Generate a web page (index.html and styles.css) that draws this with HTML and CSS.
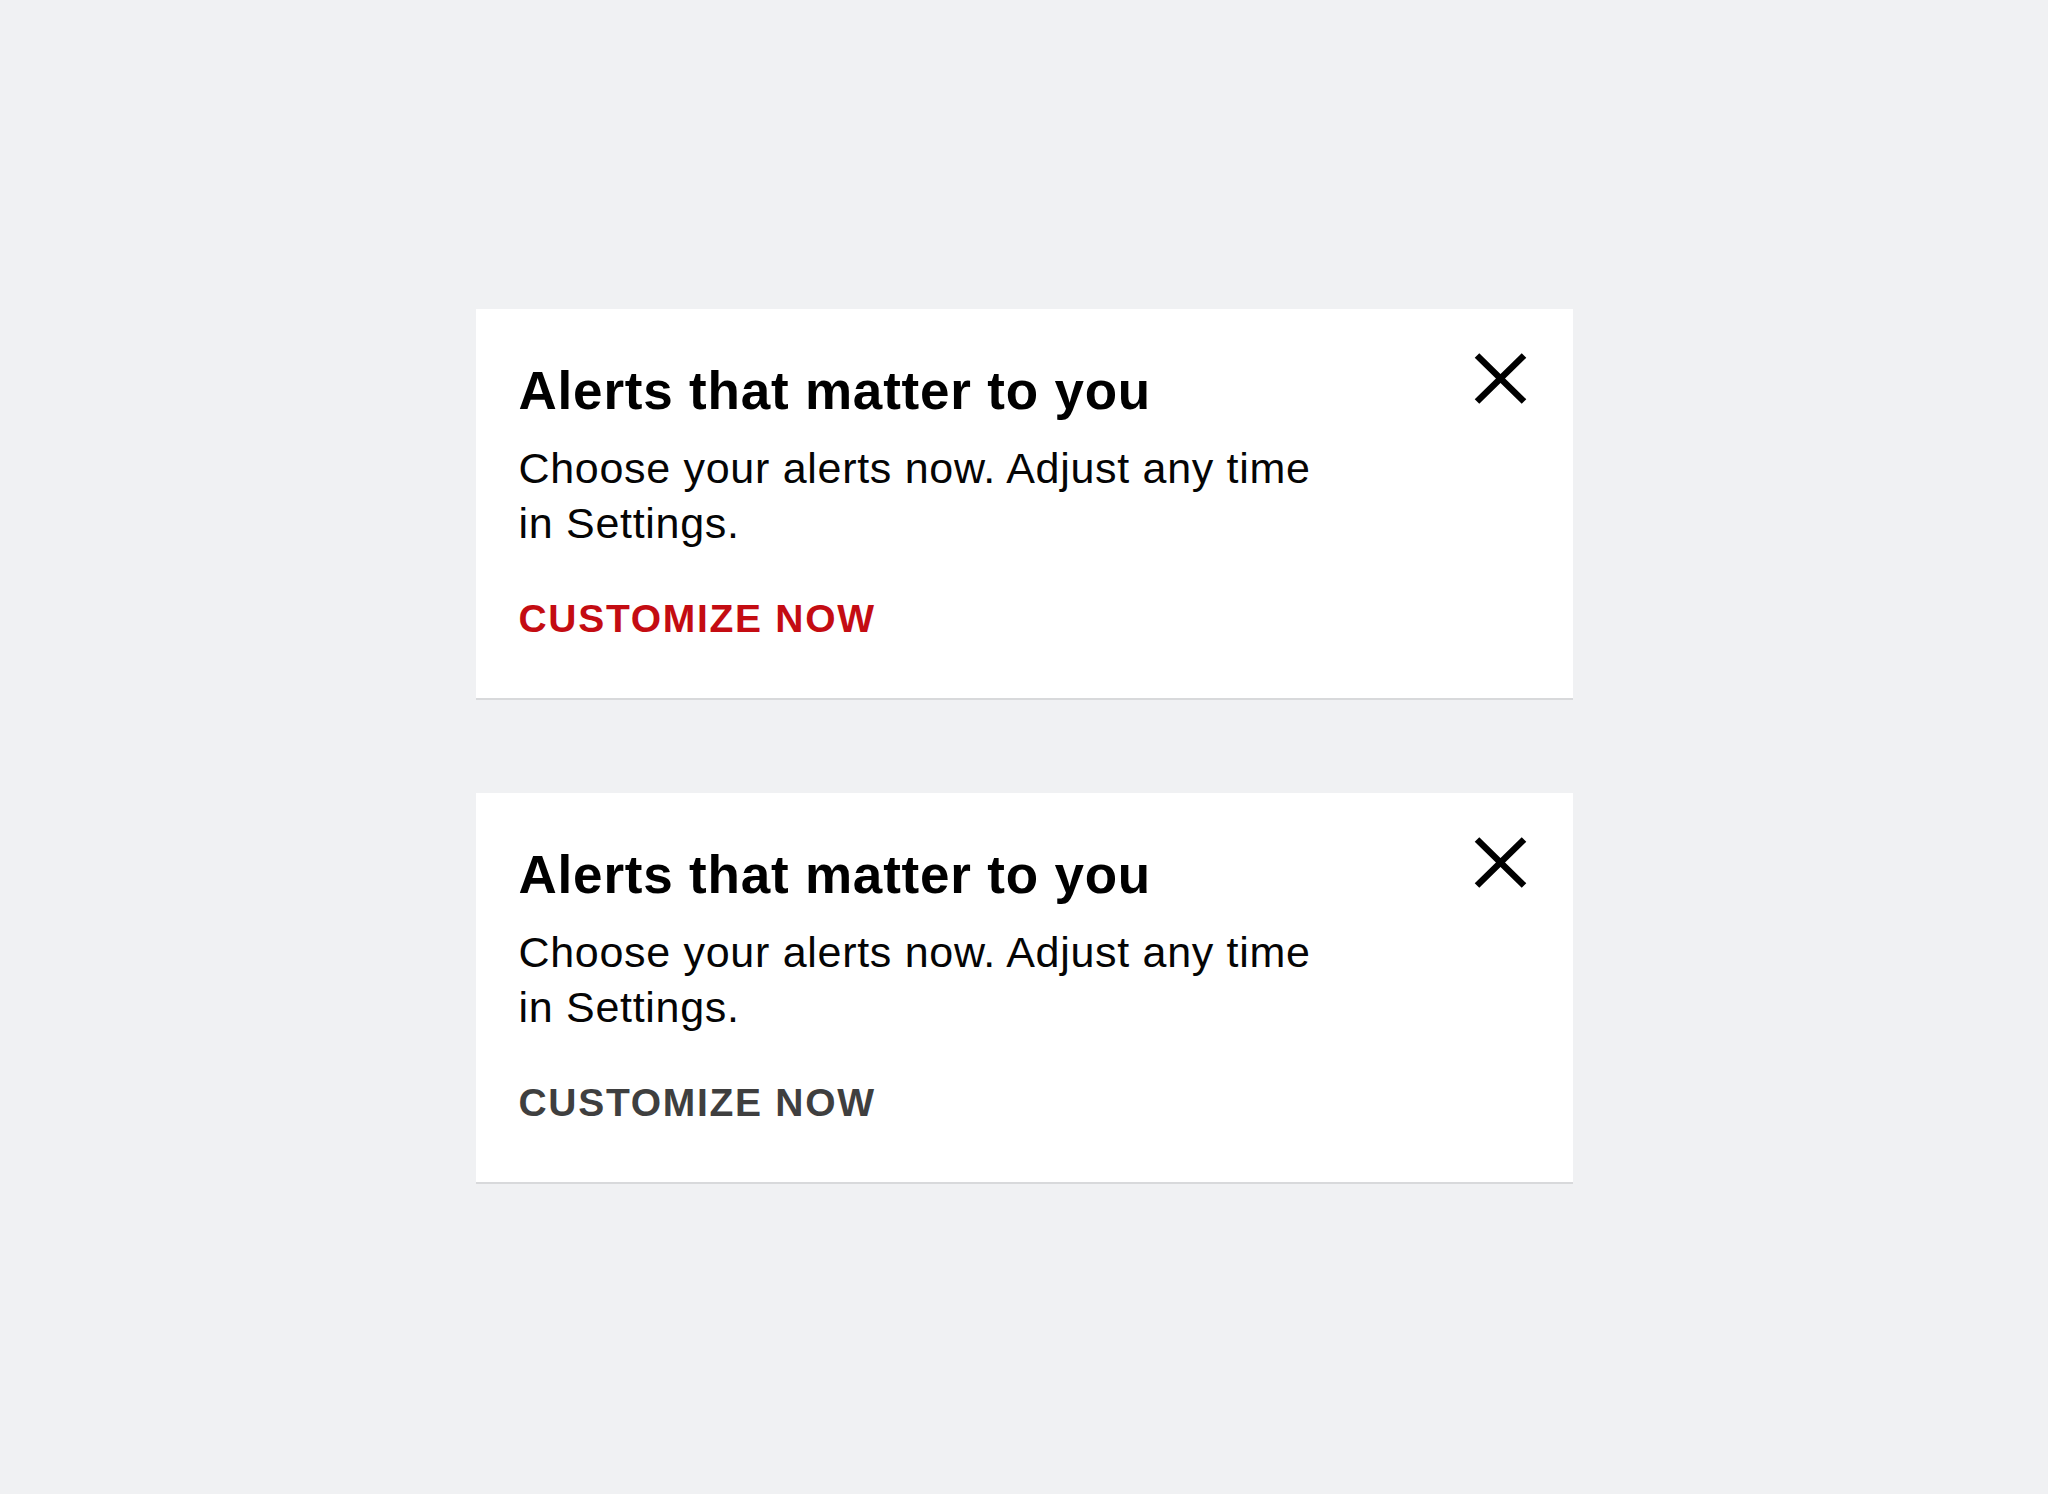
FILE: index.html
```html
<!DOCTYPE html>
<html lang="en">

<head>
  <meta charset="UTF-8">
  <meta name="viewport" content="width=device-width, initial-scale=1.0">
  <title>Alerts</title>
  <link rel="stylesheet" href="styles.css">
</head>

<body>
  <div class="container">

    <!-- Alert prompt, active -->
    <div class="card">
      <div class="card-body">
        <h2>Alerts that matter to you</h2>
        <p>Choose your alerts now. Adjust any time in Settings.</p>
        <a class="cta" href="#">CUSTOMIZE NOW</a>
      </div>
      <button class="close-button" aria-label="Close">
        <svg width="53" height="51" viewBox="0 0 53 51">
          <path d="M3 2.5 L50 48.5 M50 2.5 L3 48.5" stroke="#000" stroke-width="6.5" fill="none" />
        </svg>
      </button>
    </div>

    <!-- Alert prompt, pressed -->
    <div class="card">
      <div class="card-body">
        <h2>Alerts that matter to you</h2>
        <p>Choose your alerts now. Adjust any time in Settings.</p>
        <a class="cta cta-muted" href="#">CUSTOMIZE NOW</a>
      </div>
      <button class="close-button" aria-label="Close">
        <svg width="53" height="51" viewBox="0 0 53 51">
          <path d="M3 2.5 L50 48.5 M50 2.5 L3 48.5" stroke="#000" stroke-width="6.5" fill="none" />
        </svg>
      </button>
    </div>
  </div>
</body>

</html>
```

FILE: styles.css
```css
body {
  font-family: "Liberation Sans", Arial, sans-serif;
  background-color: #f0f1f3;
  color: #050505;
  margin: 0;
  padding: 309px 0 0;
}

.container {
  display: flex;
  flex-direction: column;
  align-items: center;
  gap: 93px;
}

.card {
  width: 1097px;
  box-sizing: border-box;
  background-color: #fff;
  border-bottom: 2px solid #d8d9db;
  padding: 44px 46px 57px 43px;
  display: flex;
  justify-content: space-between;
  align-items: flex-start;
}

.card-body {
  padding-top: 8px;
}

.card h2 {
  margin: 0;
  font-size: 53px;
  line-height: 60px;
  font-weight: bold;
  letter-spacing: 0.8px;
  color: #000;
}

.card p {
  margin: 20px 0 0;
  max-width: 815px;
  font-size: 43px;
  line-height: 55px;
  letter-spacing: 0.7px;
}

.cta {
  display: block;
  margin-top: 46px;
  font-size: 39px;
  line-height: 44px;
  font-weight: bold;
  letter-spacing: 1.7px;
  color: #c40c12;
  text-decoration: none;
}

.cta-muted {
  color: #3f3f3f;
}

.close-button {
  background: none;
  border: none;
  padding: 0;
  width: 53px;
  height: 51px;
  cursor: pointer;
}

.close-button svg {
  display: block;
}
```
